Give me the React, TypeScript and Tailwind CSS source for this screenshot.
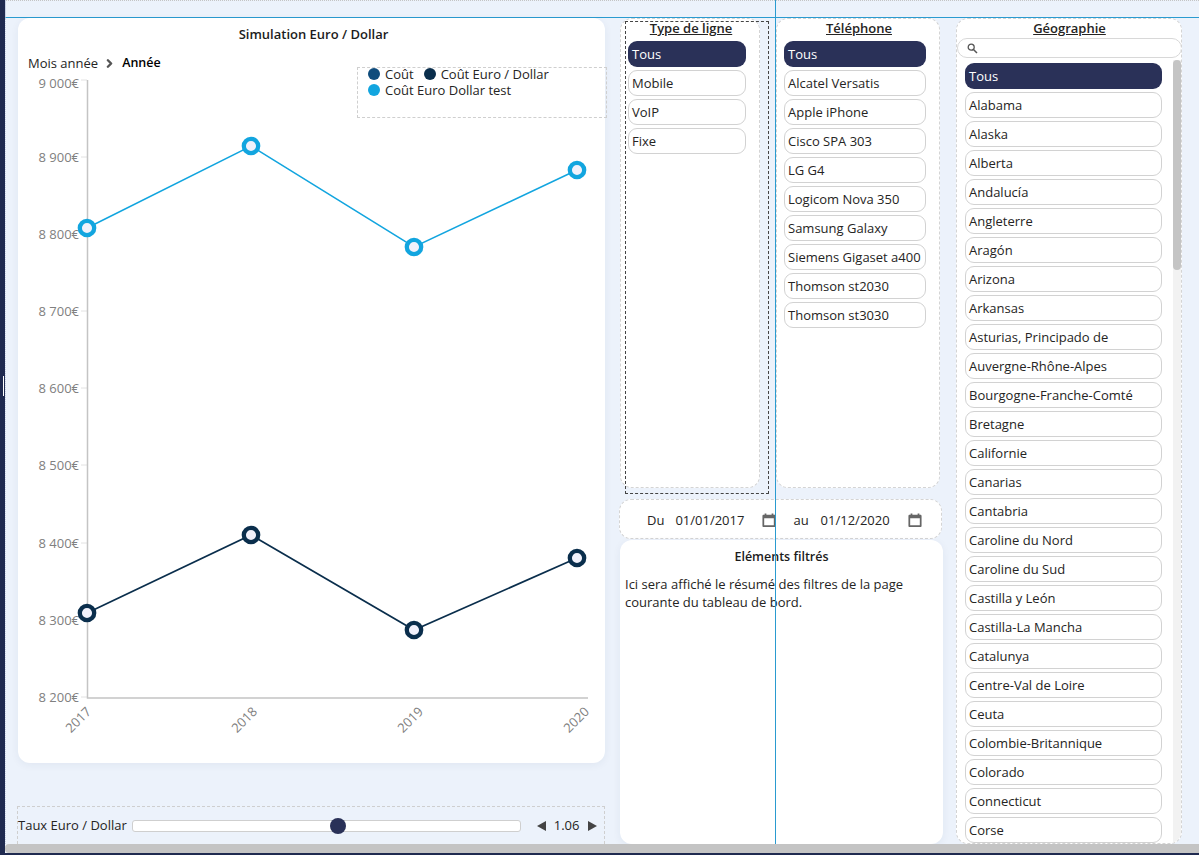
import { ChevronRight } from "lucide-react";

const typeLigne = ["Tous", "Mobile", "VoIP", "Fixe"];
const telephones = [
  "Tous",
  "Alcatel Versatis",
  "Apple iPhone",
  "Cisco SPA 303",
  "LG G4",
  "Logicom Nova 350",
  "Samsung Galaxy",
  "Siemens Gigaset a400",
  "Thomson st2030",
  "Thomson st3030",
];
const regions = [
  "Tous",
  "Alabama",
  "Alaska",
  "Alberta",
  "Andalucía",
  "Angleterre",
  "Aragón",
  "Arizona",
  "Arkansas",
  "Asturias, Principado de",
  "Auvergne-Rhône-Alpes",
  "Bourgogne-Franche-Comté",
  "Bretagne",
  "Californie",
  "Canarias",
  "Cantabria",
  "Caroline du Nord",
  "Caroline du Sud",
  "Castilla y León",
  "Castilla-La Mancha",
  "Catalunya",
  "Centre-Val de Loire",
  "Ceuta",
  "Colombie-Britannique",
  "Colorado",
  "Connecticut",
  "Corse",
];

const yTicks = [
  { label: "9 000€", y: 80, textY: 88 },
  { label: "8 900€", y: 157, textY: 161.5 },
  { label: "8 800€", y: 234, textY: 238.5 },
  { label: "8 700€", y: 311, textY: 315.5 },
  { label: "8 600€", y: 388, textY: 392.5 },
  { label: "8 500€", y: 465, textY: 469.5 },
  { label: "8 400€", y: 543, textY: 547.5 },
  { label: "8 300€", y: 620, textY: 624.5 },
  { label: "8 200€", y: 697, textY: 701.5 },
];
const xPos = [
  { label: "2017", x: 87, labelX: 92 },
  { label: "2018", x: 251, labelX: 258 },
  { label: "2019", x: 414, labelX: 424 },
  { label: "2020", x: 577, labelX: 590 },
];
const lightLine = [228, 146, 247, 170];
const darkLine = [613, 535, 630, 558];

const Slicer = ({ items, width }: { items: string[]; width: string }) => (
  <div className={`flex flex-col gap-[3px] ${width}`}>
    {items.map((item, i) => (
      <div
        key={item}
        className={
          i === 0
            ? "h-[26px] rounded-[9px] bg-[#2a3158] pl-[4px] text-[13px] leading-[26px] text-white"
            : "h-[26px] rounded-[9px] border border-[#d2d2d2] bg-white pl-[3px] text-[13px] leading-[24px] whitespace-nowrap text-[#252423]"
        }
      >
        {item}
      </div>
    ))}
  </div>
);

const CalendarIcon = () => (
  <svg width="14" height="15" viewBox="0 0 16 17" className="block shrink-0">
    <path
      d="M3 0.5h2v1.5h6V0.5h2V2h1.2c.7 0 1.3.6 1.3 1.3v11.4c0 .7-.6 1.3-1.3 1.3H1.8C1.1 16 .5 15.4.5 14.7V3.3C.5 2.6 1.1 2 1.8 2H3z M2.500 6v7.900h11V6z"
      fill="#666"
      fillRule="evenodd"
    />
  </svg>
);

const Chart = () => (
  <svg viewBox="18 72 587 691" className="h-[691px] w-[587px]">
    {yTicks.map((t) => (
      <g key={t.label}>
        <line x1="81" x2="87" y1={t.y} y2={t.y} stroke="#e2e2e2" />
        <text x="79" y={t.textY} textAnchor="end" fontSize="13" fill="#808080">
          {t.label}
        </text>
      </g>
    ))}
    <path d="M87.500 80V698H588" fill="none" stroke="#c4c4c4" strokeWidth="1.500" />
    {xPos.map((t) => (
      <text
        key={t.label}
        x={t.labelX}
        y="712.5"
        textAnchor="end"
        fontSize="13"
        fill="#808080"
        transform={`rotate(-45 ${t.labelX} 712.5)`}
      >
        {t.label}
      </text>
    ))}
    <polyline
      points={xPos.map((p, i) => `${p.x},${lightLine[i]}`).join(" ")}
      fill="none"
      stroke="#12a5df"
      strokeWidth="1.500"
    />
    <polyline
      points={xPos.map((p, i) => `${p.x},${darkLine[i]}`).join(" ")}
      fill="none"
      stroke="#0a2e4c"
      strokeWidth="1.700"
    />
    {xPos.map((p, i) => (
      <circle key={p.label} cx={p.x} cy={lightLine[i]} r="7.200" fill="#f1f1fb" stroke="#12a5df" strokeWidth="4.300" />
    ))}
    {xPos.map((p, i) => (
      <circle key={p.label} cx={p.x} cy={darkLine[i]} r="7.200" fill="#f1f1fb" stroke="#0a2e4c" strokeWidth="4.300" />
    ))}
  </svg>
);

const Legend = () => (
  <div className="absolute top-[49px] left-[339px] h-[51px] w-[250px] border border-dashed border-[#cfcfcf] pl-[10px] text-[13px] leading-[16px] text-[#252423]">
    <div className="-mt-[2px] flex items-center">
      <span className="mr-[5px] h-[12px] w-[12px] rounded-full bg-[#0f4c7c]" />
      <span className="mr-[10px]">Coût</span>
      <span className="mr-[5px] h-[12px] w-[12px] rounded-full bg-[#0a2e4c]" />
      <span>Coût Euro / Dollar</span>
    </div>
    <div className="flex items-center">
      <span className="mr-[5px] h-[12px] w-[12px] rounded-full bg-[#12a5df]" />
      <span>Coût Euro Dollar test</span>
    </div>
  </div>
);

export default function App() {
  return (
    <div className="relative flex h-[855px] w-[1199px] overflow-hidden bg-[#ecf2fb] font-['Open_Sans',sans-serif] text-[#252423]">
      <div className="w-[5px] shrink-0 bg-[#1f2a50]" />
      <div className="flex min-w-0 flex-1 flex-col">
        <div className="relative h-[18px] shrink-0 border-b border-l border-b-[#2a9bd0] border-l-[#c9d2e6]">
          <div className="h-0 border-t border-dotted border-[#c4c4c4]" />
        </div>

        <div className="flex h-[826px] shrink-0 border-l border-dotted border-[#c9d2e6] pl-[12px]">
          {/* left column */}
          <div className="flex w-[587px] shrink-0 flex-col">
            <div className="relative h-[745px] rounded-xl bg-white pt-[8px] shadow-[0_2px_8px_rgba(30,50,90,0.06)]">
              <div className="pl-[4px] text-center text-[13px] leading-[17px] font-semibold text-[#1c1c1c]">
                Simulation Euro / Dollar
              </div>
              <div className="mt-[11px] flex h-[18px] items-center pl-[10px] text-[13px] leading-[18px]">
                <span>Mois année</span>
                <ChevronRight size={13} strokeWidth={4.500} className="ml-[5px] text-[#555]" />
                <span className="ml-[6px] text-[12.5px] font-semibold text-black">Année</span>
              </div>
              <Chart />
              <Legend />
            </div>
            <div className="mt-[43px] -ml-[1px] flex h-[38px] w-[588px] items-center border-x border-t border-dashed border-[#cfcfcf] text-[13px]">
              <span className="mr-[5px] whitespace-nowrap">Taux Euro / Dollar</span>
              <div className="relative h-[12px] w-[389px] rounded-[3px] border border-[#cfcfcf] bg-white">
                <span className="absolute top-[-3px] left-[197px] h-[16px] w-[16px] rounded-full bg-[#2a3158]" />
              </div>
              <span className="ml-[16px] h-0 w-0 border-y-[5px] border-r-[9px] border-y-transparent border-r-[#444]" />
              <span className="mr-[9px] ml-[8px]">1.06</span>
              <span className="h-0 w-0 border-y-[5px] border-l-[9px] border-y-transparent border-l-[#444]" />
            </div>
          </div>

          {/* middle column */}
          <div className="ml-[15px] flex w-[323px] shrink-0 flex-col">
            <div className="relative flex h-[470px] shrink-0 gap-[16px]">
              <div className="w-[140px] rounded-xl border border-dashed border-[#d4d4d4] bg-white">
                <div className="h-[19px] pl-[2px] text-center text-[13px] leading-[19px] font-semibold underline">
                  Type de ligne
                </div>
                <div className="mt-[3px] pl-[7px]">
                  <Slicer items={typeLigne} width="w-[118px]" />
                </div>
              </div>
              <div className="w-[164px] rounded-xl border border-dashed border-[#d4d4d4] bg-white">
                <div className="h-[19px] pl-[2px] text-center text-[13px] leading-[19px] font-semibold underline">
                  Téléphone
                </div>
                <div className="mt-[3px] pl-[7px]">
                  <Slicer items={telephones} width="w-[142px]" />
                </div>
              </div>
              <div className="absolute top-[3px] left-[5px] h-[473px] w-[144px] border border-dashed border-[#444]" />
            </div>
            <div className="mt-[11px] -ml-[1px] flex h-[40px] w-[323px] shrink-0 items-center rounded-xl border border-dashed border-[#d4d4d4] bg-white pt-[3px] pl-[27px] text-[13px]">
              <span>Du</span>
              <span className="ml-[11px]">01/01/2017</span>
              <span className="mr-[17px] ml-[18px]">
                <CalendarIcon />
              </span>
              <span>au</span>
              <span className="ml-[12px]">01/12/2020</span>
              <span className="ml-[18px]">
                <CalendarIcon />
              </span>
            </div>
            <div className="mt-[1px] h-[304px] w-[323px] shrink-0 rounded-xl bg-white px-[5px] pt-[8px] text-[13px] leading-[18px] shadow-[0_2px_8px_rgba(30,50,90,0.06)]">
              <div className="text-center text-[12.5px] font-semibold text-[#1c1c1c]">Eléments filtrés</div>
              <p className="mt-[9px]">
                Ici sera affiché le résumé des filtres de la page courante du tableau de bord.
              </p>
            </div>
          </div>

          {/* right column */}
          <div className="ml-[13px] flex h-[826px] w-[226px] shrink-0 flex-col overflow-hidden rounded-xl border border-dashed border-[#d4d4d4] bg-white">
            <div className="h-[19px] shrink-0 pl-[1px] text-center text-[13px] leading-[19px] font-semibold underline">
              Géographie
            </div>
            <div className="flex h-[20px] w-[225px] shrink-0 items-center rounded-[10px] border border-[#d8d8d8] bg-white pl-[9px]">
              <svg width="11" height="11" viewBox="0 0 11 11">
                <circle cx="4.200" cy="4.200" r="3" fill="none" stroke="#555" strokeWidth="1.300" />
                <path d="M6.500 6.500L10 10" stroke="#555" strokeWidth="1.500" />
              </svg>
            </div>
            <div className="mt-[2px] flex min-h-0 flex-1 overflow-hidden pl-[8px]">
              <div className="w-[197px] shrink-0 pt-[3px]">
                <Slicer items={regions} width="w-[197px]" />
              </div>
              <div className="ml-[11px] w-[8px] shrink-0 bg-[#f2f2f2]">
                <div className="h-[210px] rounded-[4px] bg-[#c4c4c4]" />
              </div>
            </div>
          </div>
        </div>

        <div className="h-[9px] shrink-0 rounded-l-[4px] bg-[#c4c4c4]" />
        <div className="h-[2px] shrink-0 bg-[#1f2a50]" />
      </div>

      {/* guide lines over the canvas */}
      <div className="absolute top-0 bottom-[11px] left-[775px] w-px bg-[#2a9bd0]" />
      <div className="absolute top-[376px] left-[3px] h-[20px] w-px bg-white" />
    </div>
  );
}
